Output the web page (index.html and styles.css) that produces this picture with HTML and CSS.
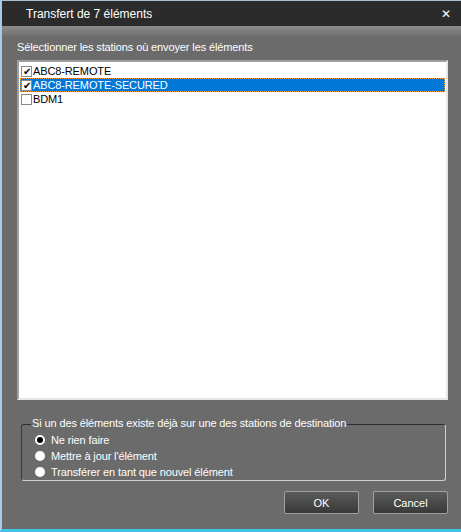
FILE: index.html
```html
<!DOCTYPE html>
<html lang="fr">
<head>
  <meta charset="UTF-8">
  <title>Transfert de 7 éléments</title>
  <link rel="stylesheet" href="styles.css">
</head>
<body>
  <div class="window">
    <!-- Title bar -->
    <div class="titlebar">
      <span class="title">Transfert de 7 éléments</span>
      <span class="close">&#x2715;</span>
    </div>

    <div class="content">
      <div class="prompt">Sélectionner les stations où envoyer les éléments</div>

      <!-- Station list -->
      <div class="listbox">
        <div class="row">
          <span class="check checked">&#x2714;</span>
          <span>ABC8-REMOTE</span>
        </div>
        <div class="row selected">
          <span class="check checked">&#x2714;</span>
          <span>ABC8-REMOTE-SECURED</span>
        </div>
        <div class="row">
          <span class="check"></span>
          <span>BDM1</span>
        </div>
      </div>

      <!-- Options -->
      <div class="groupbox">
        <div class="legend">Si un des éléments existe déjà sur une des stations de destination</div>
        <div class="option"><span class="radio on"></span>Ne rien faire</div>
        <div class="option"><span class="radio"></span>Mettre à jour l'élément</div>
        <div class="option"><span class="radio"></span>Transférer en tant que nouvel élément</div>
      </div>

      <div class="actions">
        <button class="btn">OK</button>
        <button class="btn">Cancel</button>
      </div>
    </div>
  </div>
</body>
</html>
```

FILE: styles.css
```css
body {
  margin: 0;
  padding: 0;
  font-family: "Liberation Sans", Arial, sans-serif;
  font-size: 11px;
  background-color: #6b6b6b;
}

.window {
  width: 461px;
  height: 532px;
  box-sizing: border-box;
  border-top: 1px solid #a9bfd2;
  border-left: 2px solid #a6cbe9;
  border-bottom: 3px solid #3ec4e4;
  display: flex;
  flex-direction: column;
}

/* Title bar */
.titlebar {
  height: 25px;
  background-color: #2b2b2b;
  color: #fff;
  display: flex;
  align-items: center;
  justify-content: space-between;
  padding: 0 10px 0 24px;
  font-size: 12px;
  flex-shrink: 0;
}

.close {
  font-size: 12px;
}

.content {
  flex: 1;
  background: linear-gradient(#8d8d8d 0, #6b6b6b 11px, #6b6b6b 100%);
  padding: 14px 13px 0 15px;
  display: flex;
  flex-direction: column;
  letter-spacing: -0.12px;
}

.prompt {
  color: #fff;
  height: 20px;
  line-height: 14px;
}

/* List */
.listbox {
  height: 334px;
  background-color: #fff;
  border: 2px solid #a0a0a0;
  border-right-color: #e6e6e6;
  border-bottom-color: #e6e6e6;
  padding-top: 2px;
}

.row {
  height: 14px;
  line-height: 14px;
  display: flex;
  align-items: center;
  margin: 0 1px;
  color: #000;
}

.row.selected {
  background-color: #0078d7;
  color: #fff;
  outline: 1px dotted #ff9a2a;
  outline-offset: -1px;
}

.check {
  width: 11px;
  height: 11px;
  box-sizing: border-box;
  border: 1px solid #8a8a8a;
  background-color: #fff;
  color: #000;
  font-size: 10px;
  line-height: 9px;
  text-align: center;
  margin: 0 1px 0 1px;
}

/* Group box */
.groupbox {
  margin: 24px 2px 0 4px;
  height: 48px;
  border: 1px solid #d0d0d0;
  border-top-color: #2e2e2e;
  border-left-color: #3a3a3a;
  border-radius: 3px;
  position: relative;
  padding: 7px 0 0 13px;
  color: #fff;
}

.legend {
  position: absolute;
  top: -8px;
  left: 9px;
  background-color: #6b6b6b;
  padding: 0 1px;
}

.option {
  height: 16px;
  display: flex;
  align-items: center;
}

.radio {
  width: 10px;
  height: 10px;
  border-radius: 50%;
  background-color: #fff;
  margin-right: 6px;
  box-sizing: border-box;
}

.radio.on {
  border: 2px solid #fff;
  background-color: #000;
}

/* Buttons */
.actions {
  display: flex;
  justify-content: flex-end;
  gap: 14px;
  margin-top: 10px;
}

.btn {
  width: 75px;
  height: 23px;
  font-family: inherit;
  font-size: 11px;
  color: #fff;
  background: linear-gradient(#5c5c5c, #383838);
  border: 1px solid #a0a0a0;
  border-radius: 2px;
}
```
